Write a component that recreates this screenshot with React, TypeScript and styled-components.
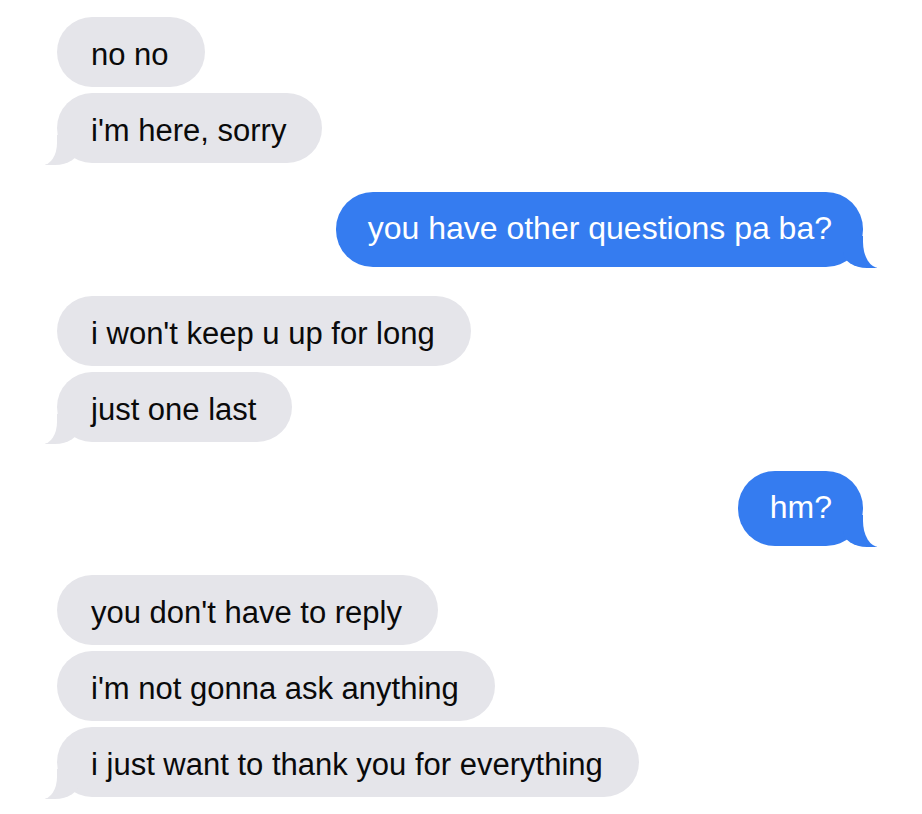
import React from "react";
import styled, {createGlobalStyle, css} from "styled-components";

type Side = "them" | "me";

type Message = {
	text: string;
	tail?: boolean;
};

type Group = {
	side: Side;
	messages: Message[];
};

const colors = {
	grey: "#e5e5ea",
	blue: "#357cf0",
	page: "#ffffff",
};

const thread: Group[] = [
	{side: "them", messages: [{text: "no no"}, {text: "i'm here, sorry", tail: true}]},
	{side: "me", messages: [{text: "you have other questions pa ba?", tail: true}]},
	{side: "them", messages: [{text: "i won't keep u up for long"}, {text: "just one last", tail: true}]},
	{side: "me", messages: [{text: "hm?", tail: true}]},
	{
		side: "them",
		messages: [
			{text: "you don't have to reply"},
			{text: "i'm not gonna ask anything"},
			{text: "i just want to thank you for everything", tail: true},
		],
	},
];

export default function App() {
	return (
		<>
			<GlobalStyle />
			<Thread>
				{thread.map((group, i) => (
					<BubbleGroup key={i} $side={group.side}>
						{group.messages.map((m, j) => (
							<Bubble key={j} $side={group.side} $tail={!!m.tail}>
								{m.text}
							</Bubble>
						))}
					</BubbleGroup>
				))}
			</Thread>
		</>
	);
}

const GlobalStyle = createGlobalStyle`
	* {
		box-sizing: border-box;
	}

	body {
		margin: 0;
		background: ${colors.page};
		font-family: "Liberation Sans", Arial, sans-serif;
	}
`;

const Thread = styled.main`
	display: flex;
	flex-direction: column;
	gap: 29px;
	padding: 17px 59px 17px 57px;
`;

const BubbleGroup = styled.section<{$side: Side}>`
	display: flex;
	flex-direction: column;
	gap: 6px;
	align-items: ${({$side}) => ($side === "me" ? "flex-end" : "flex-start")};
`;

// the little hook under the last bubble of a group
const themTail = css`
	&::before {
		content: "";
		position: absolute;
		bottom: -2px;
		left: -12px;
		width: 34px;
		height: 30px;
		background: ${colors.grey};
		border-bottom-right-radius: 24px 16px;
	}

	&::after {
		content: "";
		position: absolute;
		bottom: -2px;
		left: -44px;
		width: 44px;
		height: 30px;
		background: ${colors.page};
		border-bottom-right-radius: 14px 22px;
	}
`;

const meTail = css`
	&::before {
		content: "";
		position: absolute;
		bottom: -1px;
		right: -14px;
		width: 34px;
		height: 32px;
		background: ${colors.blue};
		border-bottom-left-radius: 24px 16px;
	}

	&::after {
		content: "";
		position: absolute;
		bottom: -1px;
		right: -44px;
		width: 44px;
		height: 32px;
		background: ${colors.page};
		border-bottom-left-radius: 16px 26px;
	}
`;

const Bubble = styled.div<{$side: Side; $tail: boolean}>`
	position: relative;
	white-space: nowrap;

	${({$side}) =>
		$side === "me"
			? css`
					height: 75px;
					padding: 0 31px 0 32px;
					border-radius: 37px;
					background: ${colors.blue};
					color: #ffffff;
					font-size: 32px;
					line-height: 72px;
			  `
			: css`
					height: 70px;
					padding: 5px 36px 0 34px;
					border-radius: 35px;
					background: ${colors.grey};
					color: #0a0a0a;
					font-size: 31px;
					line-height: 65px;
			  `}

	${({$side, $tail}) => $tail && ($side === "me" ? meTail : themTail)}
`;
